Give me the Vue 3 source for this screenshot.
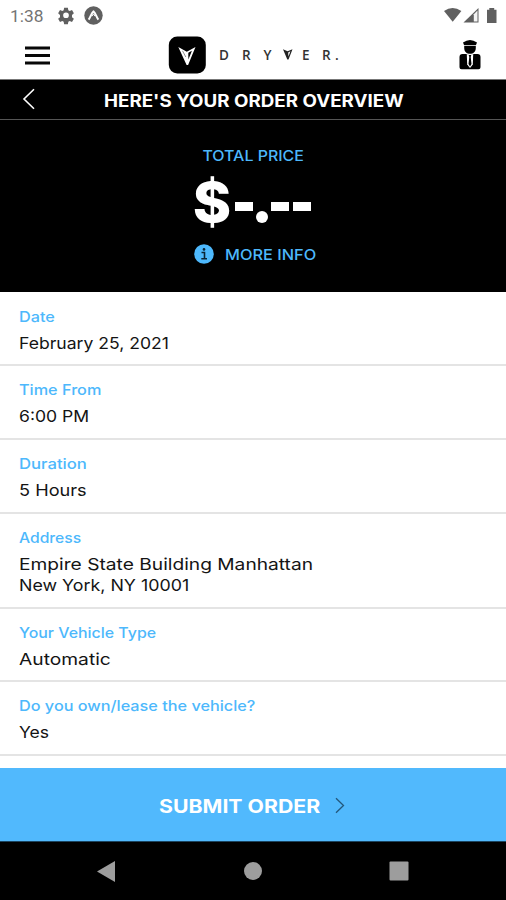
<script setup>
const details = [
  { key: 'date', label: 'Date', lines: ['February 25, 2021'] },
  { key: 'time', label: 'Time From', lines: ['6:00 PM'] },
  { key: 'duration', label: 'Duration', lines: ['5 Hours'] },
  { key: 'address', label: 'Address', lines: ['Empire State Building Manhattan', 'New York, NY 10001'] },
  { key: 'vehicle', label: 'Your Vehicle Type', lines: ['Automatic'] },
  { key: 'owner', label: 'Do you own/lease the vehicle?', lines: ['Yes'] },
]
</script>

<template>
  <div class="screen">
    <div class="status">
      <span class="clock">1:38</span>
      <svg class="gear" width="18" height="18" viewBox="0 0 24 24">
        <path fill="#606060" fill-rule="evenodd" d="M9.500 1h5l.6 3.200 1.800 1 3.100-1.100 2.500 4.300-2.500 2.100v3l2.500 2.100-2.500 4.300-3.100-1.100-1.800 1-.6 3.200h-5l-.6-3.200-1.800-1-3.100 1.100-2.500-4.300 2.500-2.100v-3L1.500 8.400 4 4.100l3.100 1.100 1.800-1zM12 7.200a3.800 3.800 0 1 0 0 7.600 3.800 3.800 0 0 0 0-7.600z" />
      </svg>
      <svg class="expo" width="19" height="19" viewBox="0 0 19 19">
        <circle cx="9.500" cy="9.500" r="9.200" fill="#606060" />
        <path d="M4.600 13.600C6.400 11.500 7.500 6.600 9.500 5.400C11.500 6.600 12.600 11.500 14.400 13.600" fill="none" stroke="#fff" stroke-width="2" />
        <path d="M8 10.200L9.500 7.800L11 10.200" fill="none" stroke="#fff" stroke-width="1" />
      </svg>
      <svg class="signals" width="54" height="18" viewBox="0 0 54 18">
        <path d="M0 4Q8.500-1.800 17.400 4L8.700 14.800Z" fill="#606060" />
        <path d="M19.500 15.600L34.500 1V15.600Z" fill="#606060" />
        <path d="M29.800 7.200L33.500 3.500V14.600H29.800Z" fill="#f4f4f4" />
        <path d="M43 2.800H45.300V1H50.200V2.800H52.500V16H43Z" fill="#606060" />
      </svg>
    </div>

    <header class="brandbar">
      <svg class="menu" width="25" height="20" viewBox="0 0 25 20">
        <path d="M0 2H25M0 9.500H25M0 17H25" stroke="#080808" stroke-width="3" />
      </svg>
      <div class="brand">
        <svg width="38" height="38" viewBox="0 0 38 38">
          <rect x=".8" y=".5" width="37" height="37" rx="8.500" fill="#000" />
          <path d="M10.300 11L18.800 15.700L27.500 11L20.100 29H18.600Z" fill="#fff" />
          <path d="M20.300 16.800L23.900 14.800L20.400 23.500Z" fill="#000" />
          <path d="M14.500 14.800L17.800 21" stroke="#777" stroke-width=".8" />
        </svg>
        <div class="wordmark">
          <span>D</span><span>R</span><span>Y</span>
          <svg width="10" height="11" viewBox="0 0 10 11">
            <path d="M0 .3L4.600 2.300L9.500.3L5.500 10.500H4.300Z" fill="#222" />
            <path d="M5.200 3.500L7.400 2.300L5.400 7.500Z" fill="#fff" />
          </svg>
          <span>E</span><span>R</span><span>.</span>
        </div>
      </div>
      <svg class="driver" width="22" height="31" viewBox="0 0 22 31">
        <path d="M4 3.600Q11-1.700 18 3.600L17 6H5Z" fill="#000" />
        <path d="M5.200 6.700H16.800V9C16.800 12.800 14.300 14.800 11 14.800S5.200 12.800 5.200 9Z" fill="#000" />
        <path d="M3.500 15H7L11 16L15 15H18.500Q21.500 15 21.500 18V28.300Q21.500 30.300 19.500 30.300H2.500Q.5 30.300.5 28.300V18Q.5 15 3.500 15Z" fill="#000" />
        <path d="M7.800 15.300H14.200L13.800 25.500L11 29L8.200 25.500Z" fill="#fff" />
        <path d="M9.700 16H12.300L11.700 18L12.500 25L11 27.500L9.500 25L10.300 18Z" fill="#000" />
      </svg>
    </header>

    <div class="titlebar">
      <svg class="back" width="14" height="22" viewBox="0 0 14 22">
        <path d="M12 1.200L2 11L12 20.800" fill="none" stroke="#fff" stroke-width="1.600" />
      </svg>
      <h1>HERE'S YOUR ORDER OVERVIEW</h1>
    </div>

    <section class="price">
      <div class="total">TOTAL PRICE</div>
      <div class="amount"><span class="dollar">$</span><i class="dash"></i><i class="point"></i><i class="dash"></i><i class="dash last"></i></div>
      <div class="more">
        <svg width="20" height="20" viewBox="0 0 20 20">
          <circle cx="10" cy="10" r="9.800" fill="#4db8fc" />
          <path d="M7.500 8.500H10.500V14.800M7.300 14.800H13" fill="none" stroke="#0b2434" stroke-width="1.600" />
          <circle cx="10" cy="5.400" r="1.300" fill="#0b2434" />
        </svg>
        <span>MORE INFO</span>
      </div>
    </section>

    <main class="details">
      <div v-for="item in details" :key="item.key" class="row" :class="item.key">
        <div class="label">{{ item.label }}</div>
        <div v-for="line in item.lines" :key="line" class="value">{{ line }}</div>
      </div>
    </main>

    <button class="submit">
      <span>SUBMIT ORDER</span>
      <svg width="10" height="17" viewBox="0 0 10 17">
        <path d="M1 1.200L8.500 8.500L1 15.800" fill="none" stroke="#24587c" stroke-width="1.300" />
      </svg>
    </button>

    <nav class="system">
      <svg width="18" height="21" viewBox="0 0 18 21"><path d="M0 10.500L18 0V21Z" fill="#9d9d9d" /></svg>
      <svg class="home" width="18" height="18" viewBox="0 0 18 18"><circle cx="9" cy="9" r="9" fill="#9d9d9d" /></svg>
      <svg width="20" height="20" viewBox="0 0 20 20"><rect x=".5" y=".5" width="19" height="19" rx="1" fill="#9d9d9d" /></svg>
    </nav>
  </div>
</template>

<style>
body { margin: 0; background: #fff; }
</style>

<style scoped>
.screen {
  width: 506px;
  height: 900px;
  display: flex;
  flex-direction: column;
  overflow: hidden;
  background: #fff;
  font-family: Inter, "Liberation Sans", sans-serif;
}
.status {
  height: 32px;
  display: flex;
  align-items: center;
  box-sizing: border-box;
  padding: 0 8px 0 10px;
}
.clock { width: 47px; font: 400 17px Roboto, sans-serif; color: #747474; transform: scaleX(1.02); transform-origin: left; }
.expo { margin-left: 9px; margin-top: -1px; }
.signals { margin-left: auto; margin-top: -1px; }
.brandbar {
  height: 47px;
  display: flex;
  align-items: center;
  padding: 0 25px;
  border-bottom: 1px solid #777;
}
.menu { margin-top: 1px; }
.brand { display: flex; align-items: center; margin: -2px 0 0 118px; }
.wordmark {
  display: grid;
  grid-template-columns: 23px 21.500px 19px 19.500px 20px 13px 6px;
  align-items: center;
  margin-left: 13px;
  font: 600 13.500px/14px "Open Sans", sans-serif;
  color: #333;
}
.driver { margin-left: auto; margin-top: -2px; }
.titlebar {
  height: 39px;
  display: flex;
  align-items: center;
  padding-left: 22px;
  background: #000;
  border-bottom: 1px solid #555;
}
.back { margin-top: -1px; }
h1 {
  margin: 3px 0 0 68px;
  font-size: 17px;
  line-height: 22px;
  font-weight: 700;
  color: #fff;
  white-space: nowrap;
  transform: scaleX(1.103);
  transform-origin: left;
}
.price {
  height: 172px;
  display: flex;
  flex-direction: column;
  align-items: center;
  background: #000;
  color: #4db8fc;
}
.total { margin-top: 26px; font-size: 14.500px; line-height: 20px; font-weight: 500; transform: scaleX(1.1); }
.amount { display: flex; height: 60px; margin-top: 6px; align-items: flex-start; color: #fff; }
.dollar { width: 39px; font-size: 55px; line-height: 60px; font-weight: 800; transform: scaleX(1.06); transform-origin: right; }
.dash { width: 18px; height: 9px; margin: 30px 0 0 1px; background: #fff; }
.dash.last { margin-left: 4px; }
.point { width: 12px; height: 12px; margin: 39px 2px 0 3px; border-radius: 50%; background: #fff; }
.more { display: flex; align-items: center; gap: 11px; width: 122px; margin: 11px 0 0 3px; font-size: 15px; line-height: 20px; font-weight: 500; }
.more span { margin-top: 2px; white-space: nowrap; transform: scaleX(1.09); transform-origin: left; }
.details { height: 476px; box-sizing: border-box; padding-top: .5px; overflow: hidden; }
.row { height: 73.800px; box-sizing: border-box; padding: 14px 19px 0; border-bottom: 2px solid #e4e4e4; }
.row.address { height: 94.800px; }
.label, .value { width: max-content; transform-origin: left; white-space: nowrap; }
.label { margin-bottom: 6px; font-size: 14.500px; line-height: 20px; font-weight: 500; color: #4db8fc; transform: scaleX(1.12); }
.value { font-size: 16.500px; line-height: 21px; color: #141414; transform: scaleX(1.065); }
.duration .label { transform: scaleX(1.15); }
.duration .value { transform: scaleX(1.1); }
.address .label { transform: scaleX(1.08); }
.address .value { transform: scaleX(1.162); }
.address .value:last-child { transform: scaleX(1.08); }
.vehicle .label { transform: scaleX(1.097); }
.vehicle .value { transform: scaleX(1.165); }
.submit {
  height: 73px;
  display: flex;
  align-items: center;
  padding: 2px 0 0 159px;
  border: 0;
  background: #51b9fd;
  color: #fff;
  font: 700 18.500px Inter, sans-serif;
}
.submit span { width: 176px; text-align: left; transform: scaleX(1.15); transform-origin: left; }
.submit svg { margin-top: -1px; }
.system {
  flex: 1;
  display: flex;
  align-items: center;
  justify-content: space-between;
  padding: 0 97px;
  background: #000;
  border-top: 1px solid #1c4560;
}
.home { margin-left: 2px; }
</style>
